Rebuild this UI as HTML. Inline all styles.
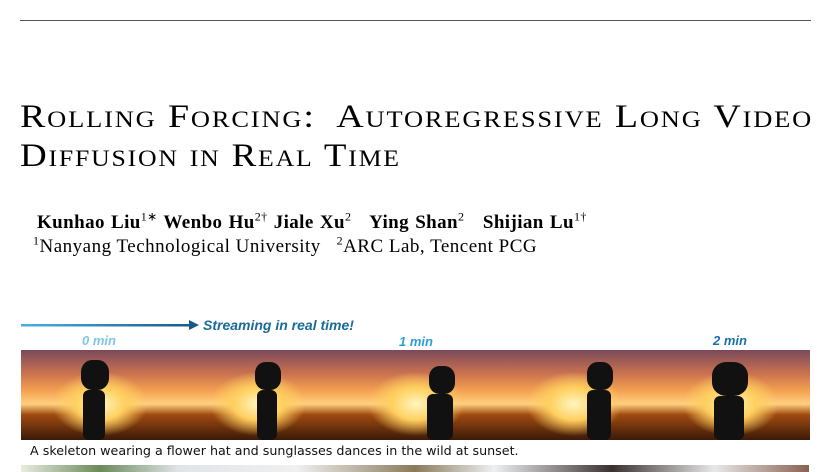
<!DOCTYPE html>
<html><head><style>
body{margin:0;width:830px;height:472px;overflow:hidden;background:#fff;font-family:"Liberation Serif",serif;position:relative}
.abs{position:absolute;white-space:nowrap}
.t{font-size:33px;font-variant:small-caps;letter-spacing:1.6px;color:#000;transform-origin:0 0}
.f{position:absolute;top:350px;width:158px;height:90px;overflow:hidden;
background:radial-gradient(ellipse 60px 40px at 50% 60%,#fff6c0,#ffd060 40%,transparent 80%),linear-gradient(#7a4a5a 0%,#c87050 25%,#f4a050 45%,#ffd080 60%,#a04a10 72%,#3a1a08 100%)}
.sk{position:absolute;background:#111;border-radius:40%}
.m{font-family:"Liberation Sans",sans-serif;font-style:italic;font-weight:bold;font-size:13px}
sup{line-height:0}
</style></head><body>
<div class="abs" style="left:20px;top:20px;width:791px;height:1px;background:#555"></div>
<div class="abs t" id="l1" style="left:20px;top:99px;transform:scaleX(1.15)">Rolling Forcing:&nbsp; Autoregressive Long Video</div>
<div class="abs t" style="left:20px;top:138px;transform:scaleX(1.12)">Diffusion in Real Time</div>
<div class="abs" style="left:37px;top:212px;font-size:19px;font-weight:bold;letter-spacing:0.4px;word-spacing:1px">Kunhao Liu<sup style="font-weight:normal;font-size:12px">1∗</sup> Wenbo Hu<sup style="font-weight:normal;font-size:12px">2†</sup> Jiale Xu<sup style="font-weight:normal;font-size:12px">2</sup>&nbsp;&nbsp; Ying Shan<sup style="font-weight:normal;font-size:12px">2</sup>&nbsp;&nbsp; Shijian Lu<sup style="font-weight:normal;font-size:12px">1†</sup></div>
<div class="abs" style="left:33px;top:236px;font-size:19px;letter-spacing:0.5px"><sup style="font-size:12px">1</sup>Nanyang Technological University &nbsp;&nbsp;<sup style="font-size:12px">2</sup>ARC Lab, Tencent PCG</div>
<svg class="abs" style="left:21px;top:319px" width="180" height="12"><defs><linearGradient id="g"><stop offset="0" stop-color="#4ab0e0"/><stop offset="1" stop-color="#1a5a8a"/></linearGradient></defs><rect x="0" y="5" width="170" height="2.5" fill="url(#g)"/><polygon points="168,1 178,6 168,11" fill="#1a5a8a"/></svg>
<div class="abs m" style="left:203px;top:317px;color:#1a6a9a;font-size:14px">Streaming in real time!</div>
<div class="abs m" style="left:82px;top:333px;color:#7ec6e8">0 min</div>
<div class="abs m" style="left:399px;top:334px;color:#2aa0d8">1 min</div>
<div class="abs m" style="left:713px;top:333px;color:#1a70b0">2 min</div>
<div class="f" style="left:21px"><div class="sk" style="left:60px;top:10px;width:28px;height:30px"></div><div class="sk" style="left:62px;top:40px;width:22px;height:50px;border-radius:6px"></div></div>
<div class="f" style="left:179px"><div class="sk" style="left:76px;top:12px;width:26px;height:28px"></div><div class="sk" style="left:78px;top:40px;width:20px;height:50px;border-radius:6px"></div></div>
<div class="f" style="left:337px"><div class="sk" style="left:92px;top:16px;width:26px;height:28px"></div><div class="sk" style="left:90px;top:44px;width:26px;height:46px;border-radius:6px"></div></div>
<div class="f" style="left:495px"><div class="sk" style="left:92px;top:12px;width:26px;height:28px"></div><div class="sk" style="left:92px;top:40px;width:24px;height:50px;border-radius:6px"></div></div>
<div class="f" style="left:652px"><div class="sk" style="left:60px;top:12px;width:36px;height:34px"></div><div class="sk" style="left:62px;top:46px;width:30px;height:44px;border-radius:6px"></div></div>
<div class="abs" style="left:30px;top:443px;font-family:'DejaVu Sans',sans-serif;font-size:12.7px;color:#111">A skeleton wearing a flower hat and sunglasses dances in the wild at sunset.</div>
<div class="abs" style="left:21px;top:465px;width:788px;height:7px;background:linear-gradient(90deg,#e8ece0,#6a8a5a 10%,#e0e4e8 20%,#f0f0f0 35%,#8a7a5a 50%,#eef0f2 60%,#3a3030 75%,#e8e8e8 88%,#8a6050 100%)"></div>
</body></html>
